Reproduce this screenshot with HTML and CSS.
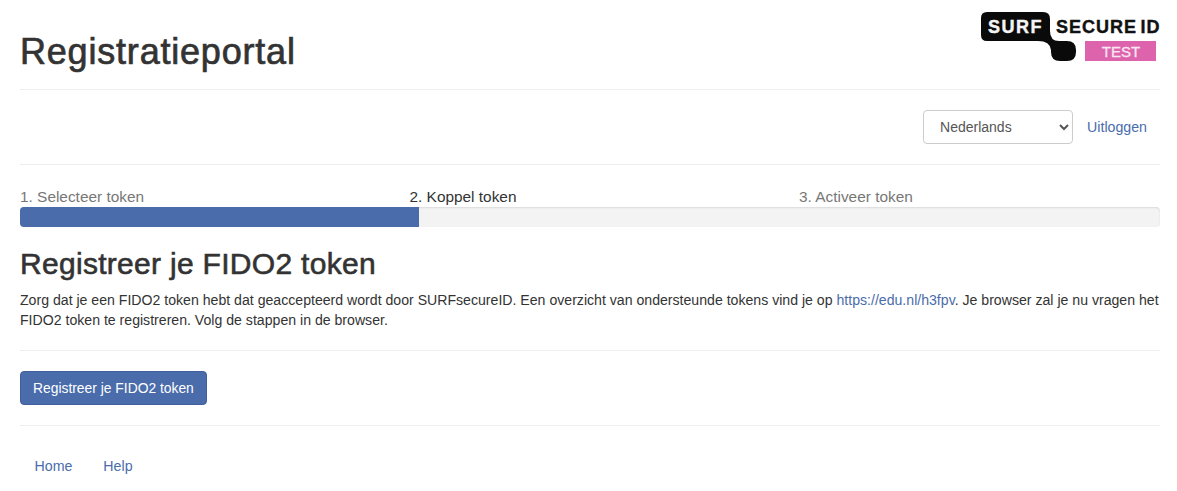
FILE: index.html
```html
<!DOCTYPE html>
<html lang="en">

<head>
    <meta charset="UTF-8">
    <meta name="viewport" content="width=device-width, initial-scale=1.0">
    <title>Registratieportal</title>
    <link rel="stylesheet" href="styles.css">
</head>

<body>
    <div class="container">
        <header class="page-header">
            <h1>Registratieportal</h1>
            <svg class="logo" width="180" height="62" viewBox="0 0 180 62" aria-label="SURF Secure ID Test">
                <path d="M7 12H63Q70 12 70 19V31Q70 41 79 41H87Q96 41 96 50V52Q96 61 87 61H80Q71 61 71 52V50Q70 41 58 41H7Q1 41 1 35V18Q1 12 7 12Z" fill="#0a0a0a"/>
                <text class="logo-surf" x="8" y="32.500">SURF</text>
                <text class="logo-secure" x="76" y="33">SECURE ID</text>
                <rect x="105" y="41" width="71" height="20" fill="#dd64ac"/>
                <text class="logo-test" x="141" y="56.500" text-anchor="middle">TEST</text>
            </svg>
        </header>

        <nav class="top-bar">
            <select class="lang-select">
                <option>Nederlands</option>
                <option>English</option>
            </select>
            <a href="#" class="logout">Uitloggen</a>
        </nav>

        <div class="steps">
            <div class="step-labels">
                <span class="step">1. Selecteer token</span>
                <span class="step step-active">2. Koppel token</span>
                <span class="step">3. Activeer token</span>
            </div>
            <div class="progress">
                <div class="progress-bar" style="width: 35%"></div>
            </div>
        </div>

        <h2>Registreer je FIDO2 token</h2>
        <p class="intro">Zorg dat je een FIDO2 token hebt dat geaccepteerd wordt door SURFsecureID. Een overzicht van ondersteunde tokens vind je op <a href="#">https://edu.nl/h3fpv</a>. Je browser zal je nu vragen het FIDO2 token te registreren. Volg de stappen in de browser.</p>

        <div class="actions">
            <button type="button" class="btn">Registreer je FIDO2 token</button>
        </div>

        <footer class="footer">
            <a href="#">Home</a>
            <a href="#">Help</a>
        </footer>
    </div>
</body>

</html>
```

FILE: styles.css
```css
/* General Styles */
body {
    font-family: "Liberation Sans", Arial, sans-serif;
    font-size: 14px;
    line-height: 20px;
    margin: 0;
    padding: 0;
    background-color: #ffffff;
    color: #333;
}

a {
    color: #4a6cab;
    text-decoration: none;
}

.container {
    padding: 0 17px 0 20px;
}

/* Header */
.page-header {
    display: flex;
    justify-content: space-between;
    height: 89px;
    border-bottom: 1px solid #eeeeee;
}

h1 {
    margin: 32px 0 0;
    font-size: 36px;
    line-height: 40px;
    font-weight: 400;
    letter-spacing: 0.8px;
    -webkit-text-stroke: 0.7px #333;
}

.logo-surf {
    font-family: "Liberation Sans", Arial, sans-serif;
    font-size: 18px;
    font-weight: 700;
    letter-spacing: 1.5px;
    fill: #f4f4f4;
    stroke: #f4f4f4;
    stroke-width: 0.4px;
}

.logo-secure {
    font-family: "Liberation Sans", Arial, sans-serif;
    font-size: 18px;
    font-weight: 700;
    letter-spacing: 1px;
    word-spacing: -2.500px;
    fill: #111111;
    stroke: #111111;
    stroke-width: 0.4px;
}

.logo-test {
    font-family: "Liberation Sans", Arial, sans-serif;
    font-size: 15px;
    fill: #f8e6f2;
    stroke: #f8e6f2;
    stroke-width: 0.3px;
}

/* Language and logout */
.top-bar {
    display: flex;
    justify-content: flex-end;
    align-items: center;
    gap: 14px;
    height: 74px;
    padding-right: 13px;
    border-bottom: 1px solid #eeeeee;
}

.lang-select {
    width: 150px;
    height: 34px;
    padding: 0 12px;
    font-family: inherit;
    font-size: 14px;
    color: #555;
    background: #ffffff;
    border: 1px solid #cccccc;
    border-radius: 4px;
}

.logout {
    font-size: 14.2px;
}

/* Steps */
.steps {
    padding-top: 22px;
}

.step-labels {
    display: grid;
    grid-template-columns: repeat(3, 389.5px);
    font-size: 15.4px;
    line-height: 20px;
    color: #777;
}

.step-active {
    color: #333;
}

.progress {
    height: 20px;
    background-color: #f3f3f3;
    border-radius: 4px;
    box-shadow: inset 0 1px 2px rgba(0, 0, 0, 0.1);
    overflow: hidden;
}

.progress-bar {
    height: 100%;
    background-color: #4a6cab;
}

/* Content */
h2 {
    margin: 20px 0 0;
    font-size: 30px;
    line-height: 33px;
    font-weight: 400;
    letter-spacing: 0.3px;
    -webkit-text-stroke: 0.6px #333;
}

.intro {
    margin: 10px 0 0;
    font-size: 14.12px;
    line-height: 20px;
}

.actions {
    margin-top: 20px;
    padding: 20px 0;
    border-top: 1px solid #eeeeee;
    border-bottom: 1px solid #eeeeee;
}

.btn {
    display: block;
    height: 34px;
    padding: 0 12px;
    font-family: inherit;
    font-size: 13.85px;
    color: #ffffff;
    background-color: #4a6cab;
    border: 1px solid #3f5f9b;
    border-radius: 4px;
}

.footer {
    display: flex;
    gap: 31px;
    padding: 30px 0 0 14.5px;
    font-size: 14.2px;
}
```
